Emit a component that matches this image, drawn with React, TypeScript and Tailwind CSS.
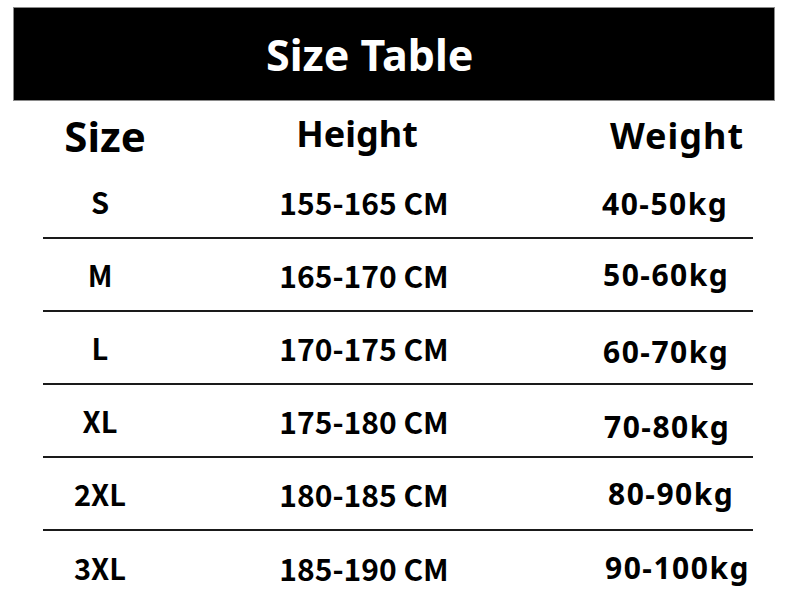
const rows = [
  { size: "S", height: "155-165 CM", weight: "40-50kg", wx: "pl-[31px]", wy: "pt-[4px]" },
  { size: "M", height: "165-170 CM", weight: "50-60kg", wx: "pl-[32px]", wy: "pt-0" },
  { size: "L", height: "170-175 CM", weight: "60-70kg", wx: "pl-[32px]", wy: "pt-[9px]" },
  { size: "XL", height: "175-180 CM", weight: "70-80kg", wx: "pl-[33px]", wy: "pt-[13px]" },
  { size: "2XL", height: "180-185 CM", weight: "80-90kg", wx: "pl-[37px]", wy: "pt-[1px]" },
  { size: "3XL", height: "185-190 CM", weight: "90-100kg", wx: "pl-[34px]", wy: "pt-0" },
];

export default function App() {
  return (
    <div className="w-[788px] h-[607px] bg-white overflow-hidden font-['Noto_Sans_CJK_SC','Noto_Sans',sans-serif] text-black">
      {/* Title bar */}
      <div className="mx-[13px] mt-[7px] h-[94px] bg-black border border-[#8a8a8a] flex items-center pl-[252px]">
        <h1 className="text-white font-bold text-[43px] leading-none font-['Noto_Sans',sans-serif]">
          Size Table
        </h1>
      </div>

      {/* Column headers */}
      <div className="ml-[43px] w-[710px] h-[65px] flex items-center font-bold font-['Noto_Sans',sans-serif]">
        <div className="w-[124px] text-center text-[42px] leading-none pt-[4px]">Size</div>
        <div className="w-[380px] text-center text-[36px] leading-none">Height</div>
        <div className="flex-1 pl-[63px] text-[36px] leading-none tracking-[1px] pt-[4px]">Weight</div>
      </div>

      {/* Rows */}
      <div className="ml-[43px] w-[710px]">
        {rows.map((r, i) => (
          <div
            key={r.size}
            className={`h-[73px] flex items-center font-bold ${
              i < rows.length - 1 ? "border-b-2 border-[#1a1a1a]" : ""
            }`}
          >
            <div className="w-[114px] text-center text-[29px] leading-none">{r.size}</div>
            <div className="w-[414px] text-center text-[30px] leading-none">{r.height}</div>
            <div className={`flex-1 ${r.wx} ${r.wy} text-[30px] leading-none tracking-[1.5px] font-['Noto_Sans',sans-serif]`}>
              {r.weight}
            </div>
          </div>
        ))}
      </div>
    </div>
  );
}
